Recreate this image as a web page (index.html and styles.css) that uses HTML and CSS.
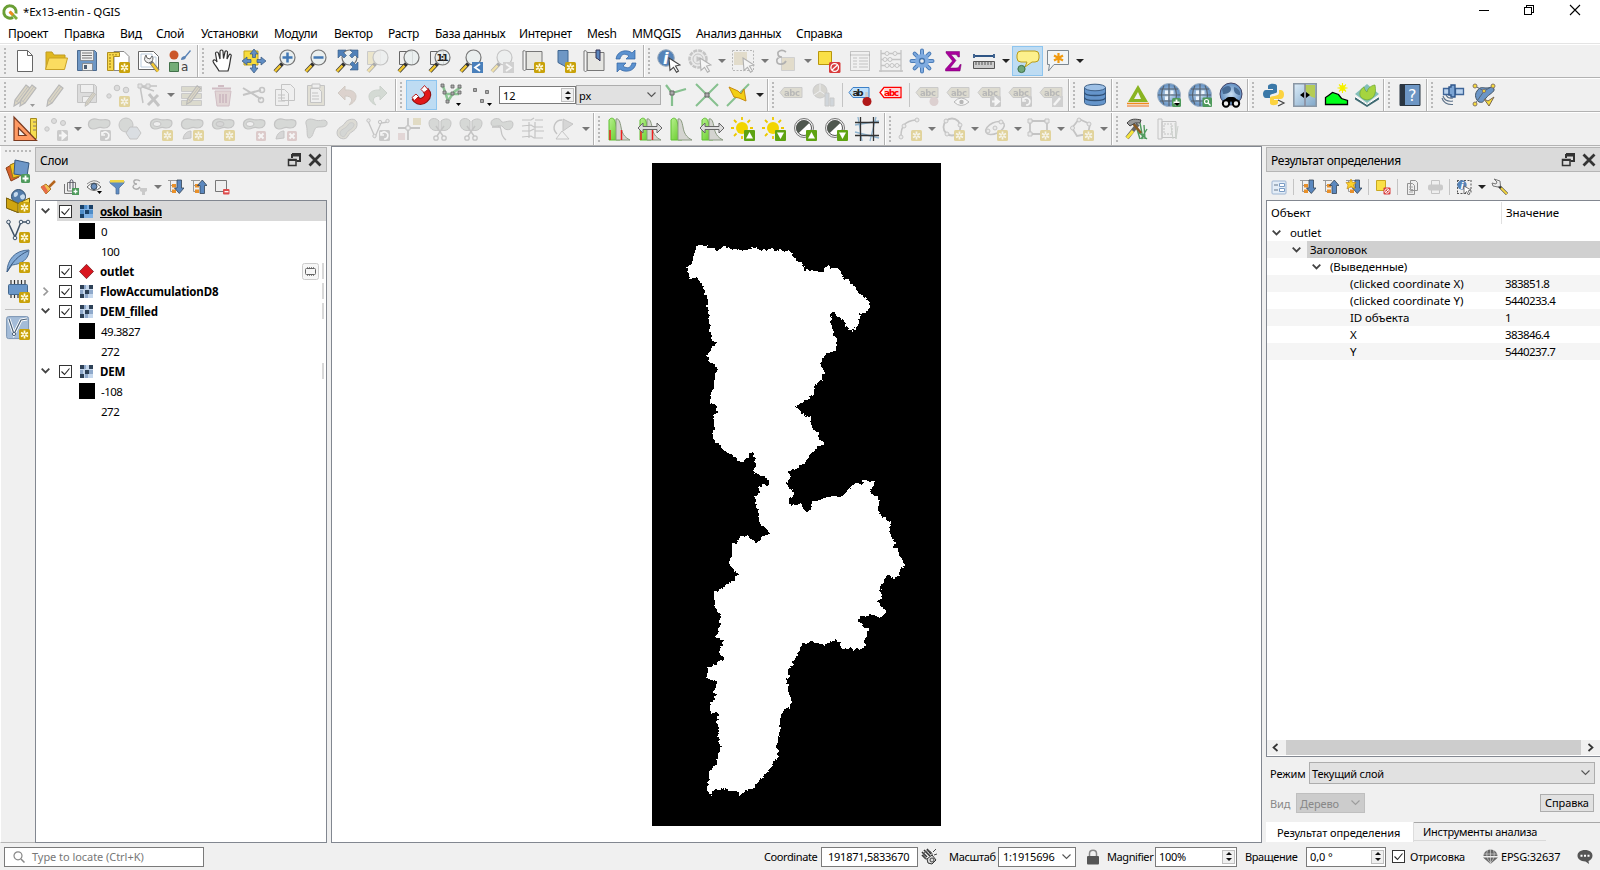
FILE: index.html
```html
<!DOCTYPE html>
<html lang="ru">
<head>
<meta charset="utf-8">
<title>*Ex13-entin - QGIS</title>
<link rel="stylesheet" href="styles.css">
</head>
<body>
<svg class="defs" aria-hidden="true">
<defs>
<linearGradient id="gsky" x1="0" y1="0" x2="1" y2="1"><stop offset="0" stop-color="#dcecf8"/><stop offset="1" stop-color="#7fa6c8"/></linearGradient>
<linearGradient id="ggreen" x1="0" y1="0" x2="1" y2="1"><stop offset="0" stop-color="#b8f090"/><stop offset="1" stop-color="#5cc81c"/></linearGradient>
<radialGradient id="gglobe"><stop offset="0" stop-color="#c9def2"/><stop offset="1" stop-color="#5d8cc0"/></radialGradient>
</defs>
<symbol id="star" viewBox="0 0 24 24"><rect x="13" y="13" width="11" height="11" rx="1.5" fill="#c9a20a"/><path d="M18.500 14.500v8M15 16.500l7 4M22 16.500l-7 4" stroke="#fffbe0" stroke-width="1.700"/><circle cx="18.500" cy="18.500" r="1" fill="#c9a20a"/></symbol>
<symbol id="plus" viewBox="0 0 24 24"><rect x="15" y="15" width="9" height="9" rx="1.500" fill="#4f9a5c"/><path d="M19.500 16.500v6M16.500 19.500h6" stroke="#fff" stroke-width="1.800"/></symbol>
<symbol id="cross" viewBox="0 0 24 24"><rect x="14" y="14" width="10" height="10" rx="1.500" fill="#b98a8a"/><path d="M16.500 16.500l5 5M21.500 16.500l-5 5" stroke="#fff" stroke-width="2"/></symbol>
<symbol id="badgearrow" viewBox="0 0 24 24"><rect x="13" y="13" width="11" height="11" rx="1.500" fill="#8a8a8a"/><path d="M15 18.500h4M18.500 15.500l3.500 3-3.500 3z" stroke="#fff" stroke-width="2" fill="#fff"/></symbol>
<symbol id="badgerot" viewBox="0 0 24 24"><rect x="13" y="13" width="11" height="11" rx="1.500" fill="#8a8a8a"/><path d="M18 22a3.500 3.500 0 1 0-2.500-5.500M15 15v3h3" stroke="#fff" stroke-width="1.600" fill="none"/></symbol>
<symbol id="up" viewBox="0 0 24 24"><rect x="13" y="13" width="11" height="11" rx="1" fill="#5ea312"/><path d="M15 21.500l3.500-6.500 3.500 6.500z" fill="#fff"/></symbol>
<symbol id="down" viewBox="0 0 24 24"><rect x="13" y="13" width="11" height="11" rx="1" fill="#5ea312"/><path d="M15 15.500l3.500 6.500 3.500-6.500z" fill="#fff"/></symbol>
<symbol id="mag" viewBox="0 0 24 24"><path d="M9.500 14.500L2 22.500" stroke="#333" stroke-width="4"/><path d="M7.500 16.700L2 22.300" stroke="#f2c832" stroke-width="2.400"/><circle cx="14.500" cy="8.500" r="7.500" fill="#e9eeee" fill-opacity=".85" stroke="#777" stroke-width="1.200"/></symbol>
<symbol id="pencil" viewBox="0 0 24 24"><path d="M15 2l4 3L8 20l-5 3 1-6z" fill="#b7a878" stroke="#555" stroke-width="1.200"/><path d="M17 3.500L6 18.500M4 17l4 3" stroke="#666" stroke-width="1"/></symbol>
<symbol id="blob" viewBox="0 0 24 24"><path d="M1.500 8C1 2 7 1 11 2.500s9-1.500 11.500 1.500c1.500 4-1 7-5 7-3 0-4-1.500-7 0-4 2-8.500 1-9-3z" fill="#a9b0a9" stroke="#777" stroke-width="1.200"/></symbol>
<symbol id="tag" viewBox="0 0 24 24"><path d="M1 9.500L5 4.500h18v10H5z" fill="#bdb898" stroke="#888"/><text x="5" y="12.700" font-size="8.500" font-weight="bold" textLength="16" fill="#555">abc</text></symbol>
<symbol id="globe" viewBox="0 0 24 24"><circle cx="12" cy="12" r="11.500" fill="url(#gglobe)" stroke="#9fb0c2"/><path d="M12 1v22M1 12h22M3 6h18M3 18h18M7 2.500Q2 12 7 21.500M17 2.500Q22 12 17 21.500" stroke="#55606c" stroke-width="1.100" fill="none"/><path d="M8 7.500h3v3.500H8zM13.500 7.500h3v3.500h-3zM8 13.500h3v3.500H8z" fill="#eef5fc"/></symbol>
<symbol id="hist" viewBox="0 0 24 24"><path d="M2 23V3c2-3 5-2 6 1 2 7 2 14 5 19z" fill="url(#ggreen)" stroke="#5fc030"/><path d="M9 23V2c3-1 4 3 5 8 1 6 3 10 9 13z" fill="#d4d4d0" stroke="#8a9a80"/></symbol>
<symbol id="dbl" viewBox="0 0 24 24"><path d="M0 11l5-5v3.500h14V6l5 5-5 5v-3.500H5V16z" fill="#ddd" stroke="#666" stroke-width="1"/></symbol>
<symbol id="sun" viewBox="0 0 24 24"><circle cx="11" cy="11" r="6" fill="#f2d500"/><path d="M11 0v3M11 19v3M0 11h3M19 11h3M3 3l2.500 2.500M16.500 5.500L19 3M3 19l2.500-2.500" stroke="#ecc800" stroke-width="1.800"/></symbol>
<symbol id="contrast" viewBox="0 0 24 24"><circle cx="11" cy="11" r="9.500" fill="#eee" stroke="#777"/><circle cx="11" cy="11" r="7.500" fill="#fff" stroke="#555"/><path d="M11 3.500a7.500 7.500 0 0 0-5.500 12.800L16.500 5.800A7.500 7.500 0 0 0 11 3.500z" fill="#505850"/></symbol>
<symbol id="scis" viewBox="0 0 24 24"><path d="M11 13C5 15 1 11 1 6s7-6 10-2zM13 13c6 2 10-2 10-7s-7-5-10-2z" fill="#a9b0a9" stroke="#777"/><path d="M8 9l7 10M16 9L9 19" stroke="#777" stroke-width="1.500"/><circle cx="8" cy="21" r="2.200" fill="none" stroke="#777" stroke-width="1.300"/><circle cx="16" cy="21" r="2.200" fill="none" stroke="#777" stroke-width="1.300"/></symbol>
<symbol id="cursor" viewBox="0 0 24 24"><path d="M12 9l11 7-4.500 1 3 5-2 1.300-3-5-3.500 3z" fill="#fff" stroke="#444" stroke-width="1.100"/></symbol>
<symbol id="raster" viewBox="0 0 13 13"><path d="M0 0h13v13H0z" fill="#c5d7ec"/><path d="M0 0h4v4H0zM9 0h4v4H9zM5 5h4v4H5zM0 9h4v4H0z" fill="#2e4157"/><path d="M4 0h2v4H4zM0 5h3v4H0zM9 5h4v4H9zM5 9h3v4H5z" fill="#8fa9cb"/></symbol>
<symbol id="rasterb" viewBox="0 0 13 13"><path d="M0 0h13v13H0z" fill="#7fb1e4"/><path d="M0 0h4v4H0zM9 0h4v4H9zM5 5h4v4H5zM0 9h4v4H0z" fill="#184068"/><path d="M4 0h3v4H4zM0 5h4v4H0zM9 5h4v4H9z" fill="#4d8cc8"/></symbol>
<symbol id="ck" viewBox="0 0 13 13"><rect x=".5" y=".5" width="12" height="12" fill="#fff" stroke="#333"/><path d="M2.500 6.500l3 3 5-6" fill="none" stroke="#222" stroke-width="1.100"/></symbol>
<symbol id="chev" viewBox="0 0 9 6"><path d="M.7.700l3.800 3.800L8.300.7" fill="none" stroke="#444" stroke-width="1.800"/></symbol>
<symbol id="chevthin" viewBox="0 0 9 6"><path d="M.5.500l4 4 4-4" fill="none" stroke="#555" stroke-width="1.100"/></symbol>
<symbol id="float" viewBox="0 0 14 14"><path d="M5 1h8v7H9.500M5 1v4M5 2.500h8" fill="none" stroke="#333" stroke-width="2"/><rect x="1.500" y="6.500" width="7.500" height="6" fill="#dadada" stroke="#333" stroke-width="1.500"/><path d="M1 7h8.500" stroke="#333" stroke-width="2"/></symbol>
<symbol id="x" viewBox="0 0 14 14"><path d="M1.500 1.500l11 11M12.500 1.500l-11 11" stroke="#333" stroke-width="2.800"/></symbol>
<symbol id="expand" viewBox="0 0 16 16"><path d="M0 1.500h9M2.500 2v10.500h4M2.500 6.500h3" stroke="#999" fill="none"/><path d="M4 5h4v3.500H4zM4 10.500h4v3.500H4z" fill="#e8902a"/><path d="M9 1h4.500v8h2.500l-4.700 5.500L6.500 9H9z" fill="#5b88bf" stroke="#345" stroke-width=".8"/></symbol>
<symbol id="collapse" viewBox="0 0 16 16"><path d="M0 1.500h9M2.500 2v10.500h4M2.500 6.500h3" stroke="#999" fill="none"/><path d="M4 5h4v3.500H4zM4 10.500h4v3.500H4z" fill="#e8902a"/><path d="M9 14.500h4.500v-8H16L11.300 1 6.500 6.500H9z" fill="#5b88bf" stroke="#345" stroke-width=".8"/></symbol>
</svg>

<header class="titlebar">
<svg class="logo" viewBox="0 0 16 16"><path d="M8 1.800a6.200 6.200 0 1 0 3 11.600M14 9.500A6.200 6.200 0 0 0 8 1.800" fill="none" stroke="#6a9f35" stroke-width="3"/><path d="M8 8l7 7" stroke="#7fb03c" stroke-width="2.800"/><path d="M7.500 7.500l3.500 3.500" stroke="#ee8a1d" stroke-width="2.600"/></svg>
<span class="apptitle">*Ex13-entin - QGIS</span>
<svg class="winctl" viewBox="0 0 110 16"><g fill="none" stroke="#000" shape-rendering="crispEdges"><path d="M3 8.500h10M48.500 5.500h7v7h-7zM50.500 5v-2h7v7h-2"/></g><path d="M94 3l10 10M104 3L94 13" stroke="#000" stroke-width="1.100"/></svg>
</header>
<nav class="menubar">
<span class="m1">Проект</span><span class="m2">Правка</span><span class="m3">Вид</span><span class="m4">Слой</span><span class="m5">Установки</span><span class="m6">Модули</span><span class="m7">Вектор</span><span class="m8">Растр</span><span class="m9">База данных</span><span class="m10">Интернет</span><span class="m11">Mesh</span><span class="m12">MMQGIS</span><span class="m13">Анализ данных</span><span class="m14">Справка</span>
</nav>

<div class="row">
<div class="tb">
<i class="grip"></i>
<svg viewBox="0 0 24 24"><path d="M4.500 1.500h10l5 5v16h-15z" fill="#fff" stroke="#666"/><path d="M14.500 1.500v5h5" fill="none" stroke="#666"/></svg>
<svg viewBox="0 0 24 24"><path d="M2 20V3h6l2 3h11v4" fill="#e0b820" stroke="#c09b20"/><path d="M1.500 20.500L5 9h18.500l-3 11.500z" fill="#fbdc60" stroke="#c9a227"/></svg>
<svg viewBox="0 0 24 24"><path d="M2.500 1.500h17l2 2v18h-19z" fill="#6e97c5" stroke="#4a6a90"/><path d="M5.500 1.500h13v10h-13zM7.500 14.500h10v7h-10z" fill="#eee" stroke="#777" stroke-width=".7"/><path d="M7 4h10M7 6.500h10M7 9h10" stroke="#777"/><path d="M9 16h3v4H9z" fill="#4c5c70"/></svg>
<svg viewBox="0 0 24 24"><path d="M8 2.500h10l5 5v14H8z" fill="#fff" stroke="#888"/><path d="M1.500 3.500h12v4h-6v14h-6z" fill="#f8d84a" stroke="#b08f20"/><path d="M4 5v1.500M7 5v1.500M10 5v1.500M3 9h2M3 12h2M3 15h2M3 18h2" stroke="#8c6e10"/><use href="#star"/></svg>
<svg viewBox="0 0 24 24"><path d="M1.500 2.500h15l5 5v13h-20z" fill="#fff" stroke="#666"/><path d="M4 5h11v3h4v10H4z" fill="none" stroke="#bcd"/><path d="M13 12l8 10" stroke="#777" stroke-width="4"/><path d="M15 14.500l6 8" stroke="#f2c832" stroke-width="2.500"/><path d="M8 8a4 4 0 0 0 6 5 4 4 0 0 0 1-6l-2 3-3-1-1-3z" fill="#eee" stroke="#666"/></svg>
<svg viewBox="0 0 24 24"><circle cx="6" cy="6" r="4.500" fill="#cb5628"/><path d="M1.500 13.500h9v9h-9z" fill="#73ad78" stroke="#42714a"/><path d="M13 11c0-3 2-4 4-4l5-6 1 1-5 6c0 2-2 3-5 3z" fill="#5a83b5"/><text x="13" y="22" font-size="12" fill="#444">a</text></svg>
</div>
<div class="tb">
<i class="grip"></i>
<svg viewBox="0 0 24 24"><path d="M8 22c-2-4-6-8-6-10 1-2 3-1 4 1L4.500 4.500c0-2 2.500-2 3 0L9 10V2.500c0-2 3-2 3 0l.5 7L14 3c.5-2 3-1 2.500.7L16 10l2-4c1-1.500 3-.5 2 1.500-1 4-1 9-3 14.500z" fill="#fff" stroke="#333" stroke-width="1.200"/></svg>
<svg viewBox="0 0 24 24"><path d="M2 2h14v14H2z" fill="#f7dc3c" stroke="#c2a31d"/><path d="M12 0l4 5h-2.500v3.500h-3V5H8zM12 24l-4-5h2.500v-3.500h3V19H16zM0 12l5-4v2.500h4v3H5V16zM24 12l-5-4v2.500h-4v3h4V16z" fill="#5f8dc4" stroke="#37567c" stroke-width=".7"/></svg>
<svg viewBox="0 0 24 24"><use href="#mag"/><path d="M14.500 3.500v10M9.500 8.500h10" stroke="#4379b5" stroke-width="2.500"/></svg>
<svg viewBox="0 0 24 24"><use href="#mag"/><path d="M9.500 8.500h10" stroke="#4379b5" stroke-width="2.500"/></svg>
<svg viewBox="0 0 24 24"><use href="#mag"/><path d="M3 1h8L8.500 3.500l3 3-2.500 2.500-3-3L3 9zM23 1h-8l2.500 2.500-3 3L17 9l3-3 3 3zM23 21v-8l-2.500 2.500-3-3L15 15l3 3-3 3z" fill="#4f80b8" stroke="#35597f" stroke-width=".6"/></svg>
<svg class="dim" viewBox="0 0 24 24"><path d="M1.500 2.500h13v13h-13z" fill="#e3d28c" stroke="#888"/><use href="#mag"/></svg>
<svg viewBox="0 0 24 24"><path d="M2.500 2.500h13v13h-13z" fill="#eee" stroke="#666"/><use href="#mag"/></svg>
<svg viewBox="0 0 24 24"><path d="M2.500 2.500h13v13h-13z" fill="#eee" stroke="#666"/><use href="#mag"/><text x="8.500" y="12" font-size="9.500" font-weight="bold" textLength="12" fill="#222">1:1</text></svg>
<svg viewBox="0 0 24 24"><use href="#mag"/><path d="M13 13h11v11H13z" fill="#4a80bb"/><path d="M21 15l-5 3.500 5 3.500" fill="none" stroke="#fff" stroke-width="1.800"/></svg>
<svg class="dim" viewBox="0 0 24 24"><use href="#mag"/><path d="M13 13h11v11H13z" fill="#999"/><path d="M16 15l5 3.500-5 3.500" fill="none" stroke="#fff" stroke-width="1.800"/></svg>
<svg viewBox="0 0 24 24"><path d="M5 2.500h16v18H5z" fill="#e6e6e2" stroke="#777"/><path d="M2 2c3-1 3 1 3 3v15c0 2-3 2-3 0z" fill="#f4f4f4" stroke="#777"/><use href="#star"/></svg>
<svg viewBox="0 0 24 24"><path d="M6 1.500h10v18l-4.500-3-5.500-3z" fill="#6e97c5" stroke="#3f6691"/><use href="#star"/></svg>
<svg viewBox="0 0 24 24"><path d="M4 3.500h17v18H4z" fill="#e6e6e2" stroke="#777"/><path d="M1 2c3-1 3 1 3 3v16c0 2-3 2-3 0z" fill="#f4f4f4" stroke="#777"/><path d="M13 1h4v11l-2-2-2-1z" fill="#5a86bd" stroke="#335"/></svg>
<svg viewBox="0 0 24 24"><path d="M2 10C3 1 14 0 18 4l3-3v9h-9l3-3C11 4 7 5 6 10zM22 14c-1 9-12 10-16 6l-3 3v-9h9l-3 3c4 3 8 2 9-3z" fill="#5c92d0" stroke="#2f62a0" stroke-width=".7"/></svg>
</div>
<div class="tb last">
<i class="grip"></i>
<svg viewBox="0 0 24 24"><circle cx="9" cy="9" r="8.300" fill="#5583b8" stroke="#9ab"/><text x="6" y="15" font-family="Liberation Serif" font-style="italic" font-weight="bold" font-size="16" fill="#fff">i</text><use href="#cursor"/></svg>
<svg class="dim" viewBox="0 0 24 24"><circle cx="10" cy="10" r="8.500" fill="#ddd" stroke="#777" stroke-width="2.500" stroke-dasharray="4 1"/><circle cx="10" cy="10" r="5" fill="#ddd" stroke="#777"/><path d="M8.500 7l5 3-5 3z" fill="#777"/><use href="#cursor"/></svg><b class="ar g"></b>
<svg class="dim" viewBox="0 0 24 24"><path d="M1.500 1.500h21v20h-21z" fill="none" stroke="#555" stroke-dasharray="2 1.500"/><path d="M3 3h13v13H3z" fill="#cbb98c"/><use href="#cursor"/></svg><b class="ar g"></b>
<svg class="dim" viewBox="0 0 24 24"><path d="M7.500 8.500h13v13h-13z" fill="#cbb98c" stroke="#999"/><path d="M12 3C8 0 3 2 4 5c0 2 2 3 4 3-4 0-6 2-5 5s7 3 9-1" fill="none" stroke="#444" stroke-width="1.700"/></svg><b class="ar g"></b>
<svg viewBox="0 0 24 24"><path d="M1.500 2.500h13v13h-13z" fill="#fae047" stroke="#b8960c"/><rect x="12" y="13" width="11.500" height="11" rx="1.500" fill="#d83b3b"/><circle cx="17.700" cy="18.500" r="3.800" fill="none" stroke="#fff" stroke-width="1.300"/><path d="M15 21l5.500-5" stroke="#fff" stroke-width="1.300"/></svg>
<svg class="dim" viewBox="0 0 24 24"><path d="M2.500 2.500h19v19h-19zM2 6h20M5 9h4M5 12h4M5 15h4M5 18h4M11 9h9M11 12h9M11 15h9M11 18h9" fill="none" stroke="#777"/></svg>
<svg class="dim" viewBox="0 0 24 24"><path d="M2 1v22M22 1v22M2 4.500h20M2 10.500h20M2 16.500h20M0 22h24" fill="none" stroke="#777" stroke-width="1.300"/><g fill="#eee" stroke="#777"><circle cx="8" cy="4.500" r="2"/><circle cx="16" cy="4.500" r="2"/><circle cx="6" cy="10.500" r="2"/><circle cx="11" cy="10.500" r="2"/><circle cx="8" cy="16.500" r="2"/><circle cx="13" cy="16.500" r="2"/><circle cx="18" cy="16.500" r="2"/></g></svg>
<svg viewBox="0 0 24 24"><path d="M12 1.500v21M1.500 12h21M4.600 4.600l14.800 14.800M19.400 4.600L4.600 19.400" stroke="#4c7db8" stroke-width="4" stroke-linecap="round"/><path d="M12 1.500v21M1.500 12h21M4.600 4.600l14.800 14.800M19.400 4.600L4.600 19.400" stroke="#7fabe0" stroke-width="2" stroke-linecap="round"/><circle cx="12" cy="12" r="7" fill="#7fabe0"/><circle cx="12" cy="12" r="2.500" fill="#eee" stroke="#4374ad" stroke-width="1.300"/></svg>
<svg viewBox="0 0 24 24"><path d="M5 2.500h13.500V8h-1.500c-.5-2-2-2.500-4-2.500H10l5 6-6 7.500h6c2.500 0 3-1 4-3.500h1.200L19 22H4.500v-2l7-8-6.500-8z" fill="#a8009c" stroke="#75006c" stroke-width=".5"/></svg>
<svg viewBox="0 0 24 24"><path d="M3 7h18M2 5v4M22 5v4" stroke="#2f5585" stroke-width="1.800"/><path d="M1.500 12.500h21v7h-21z" fill="#ccc" stroke="#555"/><path d="M4 13v3M7 13v3M10 13v3M13 13v3M16 13v3M19 13v3" stroke="#555"/></svg><b class="ar"></b>
<span class="on"><svg viewBox="0 0 24 24"><path d="M5 2h14q4 0 4 4v3q0 4-4 4h-3l-7 5 2-5H5q-4 0-4-4V6q0-4 4-4z" fill="#fdf08c" stroke="#b99c1a"/><circle cx="5.500" cy="20" r="3.600" fill="#6fa87a" stroke="#3d6f49"/></svg></span>
<svg viewBox="0 0 24 24"><path d="M1.500 1.500h21v14H8L2.500 22l1-6.500h-2z" fill="#f1f5f7" stroke="#7d8790"/><path d="M12.500 4v10M8 6.500l9 5M17 6.500l-9 5" stroke="#f09a10" stroke-width="2.200"/></svg><b class="ar"></b>
</div>
</div>

<div class="row">
<div class="tb">
<i class="grip"></i>
<svg class="dim" viewBox="0 0 24 24"><use href="#pencil" x="-2"/><use href="#pencil" x="4"/><path d="M17 21h5l-2.500 3z"/></svg>
<svg class="dim" viewBox="0 0 24 24"><use href="#pencil"/></svg>
<svg class="dim" viewBox="0 0 24 24"><path d="M2.500 1.500h17l2 2v16h-19z" fill="#bbb" stroke="#777"/><path d="M5.500 1.500h13v8h-13zM7.500 13.500h8v6h-8z" fill="#eee" stroke="#777"/><use href="#pencil" x="8" y="8" width="16" height="16"/></svg>
<svg class="dim" viewBox="0 0 24 24"><g fill="#bbb" stroke="#777"><circle cx="3" cy="13" r="2.200"/><circle cx="11" cy="5" r="2.800"/><circle cx="20" cy="7" r="2.800"/></g><use href="#star"/></svg>
<svg class="dim" viewBox="0 0 24 24"><path d="M3 3h17M3 3l3 17M3 3l14 5" stroke="#777" stroke-width="1.500"/><path d="M1 1h4v4H1zM9 1h4v4H9z" fill="#ccc" stroke="#777"/><path d="M11 22l10-10M12 11l10 12" stroke="#777" stroke-width="3"/></svg><b class="ar g"></b>
<svg class="dim" viewBox="0 0 24 24"><path d="M1.500 3.500h20v5h-20zM1.500 10.500h20v5h-20zM1.500 17.500h20v5h-20z" fill="#b8b490" stroke="#888"/><use href="#pencil" x="4" y="1" width="21" height="21"/></svg>
<svg class="dim" viewBox="0 0 24 24"><path d="M4 8h16l-2 15H6z" fill="#c8a8a8" stroke="#967"/><path d="M1 5.500h19M7 3h6M9 11v9M12 11v9M15 11v9" stroke="#967" stroke-width="2"/></svg>
<svg class="dim" viewBox="0 0 24 24"><path d="M1 5l18 11M1 12l18-5" stroke="#777" stroke-width="2"/><circle cx="20" cy="7" r="2.500" fill="none" stroke="#777" stroke-width="1.500"/><circle cx="19" cy="17" r="2.500" fill="none" stroke="#777" stroke-width="1.500"/></svg>
<svg class="dim" viewBox="0 0 24 24"><path d="M8.500 1.500h9l4 4v12h-13zM2.500 6.500h9l4 4v12h-13z" fill="#eee" stroke="#777"/><path d="M5 12h7M5 15h7M5 18h7" stroke="#777"/></svg>
<svg class="dim" viewBox="0 0 24 24"><path d="M3.500 2.500h17v20h-17z" fill="#c9c3a8" stroke="#777"/><path d="M6.500 5.500h8l3 3v11h-11zM8 1h8v4H8z" fill="#eee" stroke="#777"/><path d="M8 10h6M8 13h7M8 16h7" stroke="#777"/></svg>
<svg class="dim" viewBox="0 0 24 24"><path d="M3 10l7-7v4c15-1 13 12 4 15 4-4 4-9-4-9v4z" fill="#b99f90" stroke="#987"/></svg>
<svg class="dim" viewBox="0 0 24 24"><path d="M21 10l-7-7v4C-1 6 1 19 10 22c-4-4-4-9 4-9v4z" fill="#a5b5a5" stroke="#898"/></svg>
</div>
<div class="tb">
<i class="grip"></i>
<span class="on"><svg viewBox="0 0 24 24"><path d="M4.500 14.500c3 4.500 7 5 10.500 2s3.500-6 .5-9.500" fill="none" stroke="#8e1010" stroke-width="7"/><path d="M4.500 14.500c3 4.500 7 5 10.500 2s3.500-6 .5-9.500" fill="none" stroke="#e01818" stroke-width="5"/><path d="M2 14.500l4-3.500 2.500 2.500L4.500 17.500zM11 6.500l3.500-4L18 6.500 14 9.500z" fill="#fff" stroke="#b22" stroke-width="1"/></svg></span>
<svg viewBox="0 0 24 24"><path d="M3 3l5 15 6-9 7-5M5 11h14" fill="none" stroke="#8cc494" stroke-width="2.500"/><g fill="#aaa" stroke="#666" stroke-width=".8"><path d="M1 1h3v3H1zM3 8h3v3H3zM6 17h3v3H6zM11 9h3v3h-3zM11 2h3v3h-3zM18 2h3v3h-3zM18 8h3v3h-3z"/></g><path d="M16 20h5l-2.500 3z"/></svg>
<svg viewBox="0 0 24 24"><g fill="#aaa" stroke="#777"><path d="M2.500 5.500h3v3h-3zM14.500 7.500h3v3h-3zM9.500 16.500h3v3h-3z"/></g><path d="M16 20h5l-2.500 3z"/></svg>
<div class="spin tol"><span>12</span><em><u></u><s></s></em></div>
<div class="combo unit"><span>px</span><svg class="cv" viewBox="0 0 9 6"><use href="#chevthin"/></svg></div>
<svg viewBox="0 0 24 24"><path d="M2 2l6 8 14-4M8 9v14" fill="none" stroke="#86c08f" stroke-width="2.200"/><path d="M6 8h4v4H6z" fill="#aaa" stroke="#666"/></svg>
<svg viewBox="0 0 24 24"><path d="M1 1l22 22M23 1L1 23" stroke="#86c08f" stroke-width="2"/><path d="M10 10h4v4h-4z" fill="#aaa" stroke="#666"/></svg>
<svg viewBox="0 0 24 24"><path d="M23 1L1 23" stroke="#86c08f" stroke-width="2"/><path d="M3 4l9 4 3 3 3-5 2 12-7-3-5-1z" fill="#f2cf15" stroke="#c78a10"/></svg><b class="ar"></b>
</div>
<div class="tb">
<i class="grip"></i>
<svg class="dim" viewBox="2 0 24 24"><use href="#tag" width="24" height="24"/></svg>
<svg class="dim" viewBox="0 0 24 24"><circle cx="8" cy="8" r="7" fill="#aaa69a" stroke="#888"/><path d="M8 8V1M8 8l6 4M8 8l-6 4" stroke="#eee"/><path d="M13 10h4v13h-4zM18 15h4v8h-4z" fill="#9aa8b4" stroke="#888"/></svg>
<i class="vs"></i>
<svg viewBox="0 0 24 24"><path d="M1 9.500L5 4.500h16v10H5z" fill="#bfe0fb" stroke="#3c80c8"/><text x="4.500" y="13" font-size="9.500" font-weight="bold" textLength="11" fill="#222">ab</text><path d="M18.500 9v8" stroke="#ccc" stroke-width="2.600"/><circle cx="19" cy="18.500" r="4.500" fill="#b01818"/></svg>
<svg viewBox="0 0 24 24"><path d="M1 9.500L5 4.500h17v10H5z" fill="#fff" stroke="red" stroke-width="1.300"/><path d="M5 5h16v9H5z" fill="#ffd6d6"/><text x="5" y="12.500" font-size="9" font-weight="bold" textLength="15" fill="red">abc</text></svg>
<i class="vs"></i>
<svg class="dim" viewBox="0 0 24 24"><use href="#tag"/><circle cx="19" cy="18.500" r="4.500" fill="#b99"/></svg>
<svg class="dim" viewBox="0 0 24 24"><use href="#tag"/><path d="M8 19q7-8 15 0-8 7-15 0z" fill="#fff" stroke="#555"/><circle cx="15.500" cy="19" r="2.200" fill="#555"/></svg>
<svg class="dim" viewBox="0 0 24 24"><use href="#tag"/><use href="#badgearrow"/></svg>
<svg class="dim" viewBox="0 0 24 24"><use href="#tag"/><use href="#badgerot"/></svg>
<svg class="dim" viewBox="0 0 24 24"><use href="#tag"/><rect x="13" y="13" width="11" height="11" fill="#999"/><path d="M15 22l6-7" stroke="#fff" stroke-width="2.500"/></svg>
</div>
<div class="tb">
<i class="grip"></i>
<svg class="nudge" viewBox="0 0 24 24"><path d="M1.500 4.500v15c0 4 21 4 21 0v-15" fill="#6595cb" stroke="#3d5f86"/><path d="M1.500 9.500c0 4 21 4 21 0M1.500 14.500c0 4 21 4 21 0" fill="none" stroke="#2f4f74" stroke-width="1.300"/><ellipse cx="12" cy="4.500" rx="10.500" ry="3.300" fill="#9dc0e6" stroke="#3d5f86"/></svg>
</div>
<div class="tb">
<i class="grip"></i>
<svg class="nudge" viewBox="0 0 24 24"><path d="M12 2l10 17H2zM12 9l-4 7h7z" fill="#8ab422" fill-rule="evenodd"/><path d="M1 20.500h22" stroke="#f08a1c" stroke-width="1.500"/><path d="M1 23h22" stroke="#f09a5c" stroke-width="1.500"/></svg>
<svg class="nudge" viewBox="0 0 24 24"><use href="#globe"/><use href="#plus"/><path d="M17 20h6l-3 3z"/></svg>
<svg class="nudge" viewBox="0 0 24 24"><use href="#globe"/><rect x="14.500" y="14.500" width="9.500" height="9.500" rx="1" fill="#4f9a5c"/><circle cx="18.500" cy="18.500" r="2" fill="none" stroke="#fff" stroke-width="1.200"/><path d="M20 20l2.500 2.500" stroke="#fff" stroke-width="1.300"/></svg>
<svg class="nudge" viewBox="0 0 24 24"><circle cx="12" cy="11" r="11" fill="url(#gglobe)" stroke="#446"/><path d="M3 6c4-4 9-4 9 0s-5 5-8 5zM15 4c4 1 7 4 6 8-3 0-7-2-6-8z" fill="#476b94"/><path d="M5 22c-1-3 2-8 5-8h4c3 0 6 5 5 8h-5l-2-4-2 4z"/><circle cx="7" cy="20.500" r="3.200" fill="#eee" stroke="#000" stroke-width="2"/><circle cx="17" cy="20.500" r="3.200" fill="#eee" stroke="#000" stroke-width="2"/></svg>
</div>
<div class="tb">
<i class="grip"></i>
<svg class="nudge" viewBox="0 0 24 24"><path d="M6 6V3c1-3 9-3 9 0v6c0 2-7 1-7 4v2H4C0 15 0 7 4 7h7V6z" fill="#3a78a8"/><path d="M17 7h2c4 0 4 9 0 9h-7v1h4v3c-1 3-8 3-8 0v-5c0-3 9-1 9-5z" fill="#fcd340"/><path d="M16 17l6 3-6 3" fill="none" stroke="#444" stroke-width="1.200"/></svg>
<svg class="nudge" viewBox="0 0 24 24"><path d="M.8.800h22.400v22.400H.8z" fill="url(#gsky)" stroke="#8a97a5" stroke-width="1.600"/><path d="M12 2h10v13q-8-2-10-9z" fill="#b5cc55"/><path d="M12 1v22" stroke="#889" stroke-width="1.500"/><path d="M7 12l4-3v6zM17 12l-4-3v6z"/></svg>
<svg class="nudge" viewBox="0 0 24 24"><path d="M1.500 21.500v-7l3-2 4-3 6 2 3 4 6 2v4z" fill="#00ff1a" stroke="#000" stroke-width="1.300"/><circle cx="18.500" cy="5" r="3" fill="#ff0"/><path d="M18.500 0v10M13.500 5h10M15 1.500l7 7M22 1.500l-7 7" stroke="#f4ee00" stroke-width="1.100"/></svg>
<svg class="nudge" viewBox="0 0 24 24"><path d="M0 14v2.500L12 24l12-7.500V14l-12 7z" fill="#3f6a72"/><path d="M0 11L12 1l12 10-12 9z" fill="#83bfb9"/><path d="M0 13.500l12 8 12-8" stroke="#fff" fill="none"/><path d="M12 17C1 15 5 6 9 4c1 4 3 5 3 5 1-5 6-7 8-7 2 10-2 14-8 15z" fill="#a6d43f" stroke="#6aa52f" stroke-width=".7"/></svg>
</div>
<div class="tb">
<i class="grip"></i>
<svg class="nudge" viewBox="0 0 24 24"><path d="M2 1.500h20v21H2z" fill="#6d96c4" stroke="#2b3642"/><path d="M2 1h5v22H2z" fill="#2b3642"/><text x="10" y="17.500" font-family="Liberation Serif" font-size="16" fill="#fff">?</text></svg>
</div>
<div class="tb last">
<i class="grip"></i>
<svg class="nudge" viewBox="0 0 24 24"><path d="M2.500 5.500h6v6h-6zM14.500 5.500h8v6h-8z" fill="#b9d2ee" stroke="#3f6598" stroke-width="1.300"/><path d="M8 4h2V2h4v12h-4v-2H8z" fill="#7aa3d3" stroke="#2f568a" stroke-width="1.400"/><path d="M12 15c-4 1-6-1-7-3M12 18c-6 1-9-2-10-5M12 21.500C6 22 2 19 1 15" fill="none" stroke="#5a6f87" stroke-width="1.100"/></svg>
<svg class="nudge" viewBox="0 0 24 24"><path d="M5 8c3-5 6-3 9-3 4 0 7-2 8 1s-5 5-8 9-3 5-7 4c-3-2-5-7-2-11z" fill="#6b95c6" stroke="#456"/><path d="M3 3l9 5 9-5M12 8L3 21" stroke="#567" fill="none"/><g fill="#f8dc3a" stroke="#876"><circle cx="3" cy="3" r="2"/><circle cx="21" cy="3" r="2"/><circle cx="3" cy="21" r="2"/><circle cx="12" cy="8" r="1.600"/></g><path d="M12 16l4 2 6-4-5 9z" fill="#f8dc3a" stroke="#765"/></svg>
</div>
</div>

<div class="row">
<div class="tb">
<i class="grip"></i>
<svg viewBox="0 0 24 24"><path d="M17.500 1.500h6v20h-6z" fill="#f6dd4f" stroke="#a48a20"/><path d="M20 5h3M20 9h3M20 13h3" stroke="#876"/><path d="M1 0v23.500h22.500zM5.500 11v7.500H13z" fill="#ff9a63" fill-rule="evenodd" stroke="#7a3a20" stroke-width="1.200"/></svg>
<svg class="dim" viewBox="0 0 24 24"><g fill="#bbb" stroke="#777"><circle cx="3" cy="12" r="2.200"/><circle cx="10" cy="4" r="2.500"/><circle cx="19" cy="6" r="2.500"/></g><use href="#badgearrow"/></svg><b class="ar g"></b>
<svg class="dim" viewBox="0 0 24 24"><use href="#blob"/><use href="#badgerot"/></svg>
<svg class="dim" viewBox="0 0 24 24"><circle cx="8" cy="8" r="7" fill="#aab0aa" stroke="#777"/><path d="M8 16l4-6h7l4 6-4 6h-7z" fill="#b5bfcc" stroke="#777"/></svg>
<svg class="dim" viewBox="0 0 24 24"><use href="#blob"/><ellipse cx="8" cy="7" rx="4" ry="2.500" fill="#eee" stroke="#777"/><use href="#star"/></svg>
<svg class="dim" viewBox="0 0 24 24"><use href="#blob"/><path d="M3 22c1-6 5-8 8-8v7z" fill="#aaa" stroke="#777"/><use href="#star"/></svg>
<svg class="dim" viewBox="0 0 24 24"><use href="#blob"/><ellipse cx="9" cy="7" rx="4" ry="2.500" fill="#aaa" stroke="#777"/><use href="#star"/></svg>
<svg class="dim" viewBox="0 0 24 24"><use href="#blob"/><ellipse cx="8" cy="7" rx="4" ry="2.500" fill="#eee" stroke="#777"/><use href="#cross"/></svg>
<svg class="dim" viewBox="0 0 24 24"><use href="#blob"/><path d="M3 22c1-6 5-8 8-8v7z" fill="#aaa" stroke="#777"/><use href="#cross"/></svg>
<svg class="dim" viewBox="0 0 24 24"><path d="M2 7C1 2 6 1 11 3s10-2 12 2c1 5-4 5-9 5s-4 11-9 11c-3 0-1-9-3-14z" fill="#a9b0a9" stroke="#777"/></svg>
<svg class="dim" viewBox="0 0 24 24"><path d="M2 16C2 10 8 10 10 6s11-6 12 0c1 8-7 8-9 13s-11 3-11-3z" fill="#bbb7a5" stroke="#777"/><path d="M5 16c0-4 6-4 8-8s7-2 6 0c-1 5-6 4-8 9s-6 2-6-1z" fill="#a5aaa5" stroke="#888"/></svg>
<svg class="dim" viewBox="0 0 24 24"><path d="M2 4l7 16 6-14 7-1" fill="none" stroke="#777" stroke-width="1.300"/><g fill="#ddd" stroke="#777"><circle cx="2.500" cy="3.500" r="1.700"/><circle cx="14" cy="5" r="1.700"/><circle cx="21.500" cy="4" r="1.700"/><circle cx="8.500" cy="19" r="1.700"/></g><use href="#badgerot"/></svg>
<svg class="dim" viewBox="0 0 24 24"><path d="M11 1v22M1 11h22" stroke="#777" stroke-width="1.800"/><rect x="16" y="1" width="8" height="7" fill="#c9b878"/><rect x="1" y="16" width="7" height="7" fill="#caa"/><path d="M9 9h4v4H9z" fill="#eee" stroke="#777"/></svg>
<svg class="dim" viewBox="0 0 24 24"><use href="#scis"/></svg>
<svg class="dim" viewBox="0 0 24 24"><use href="#scis"/></svg>
<svg class="dim" viewBox="0 0 24 24"><path d="M1 6c0-5 9-6 10-2s12-4 12 3-8 7-10 3S1 13 1 6z" fill="#a9b0a9" stroke="#777"/><path d="M8 9c6 2 0 8 8 14M2 10h9" fill="none" stroke="#777" stroke-width="1.300"/></svg>
<svg class="dim" viewBox="0 0 24 24"><path d="M1 3h9l3-2M14 3h8M1 9l9-1 3 2h9M1 14h8l4-2M14 14h9M1 20l9-1 3 2h9M8 5v16M14 5v16" fill="none" stroke="#777" stroke-width="1.200"/></svg>
<svg class="dim" viewBox="0 0 24 24"><path d="M11 2l10 5-10 7z" fill="#aaa" stroke="#777"/><path d="M10 14L4 22h13z" fill="none" stroke="#777"/><path d="M5 17C-1 11 3 3 10 3" fill="none" stroke="#777" stroke-width="1.400"/></svg><b class="ar g"></b>
</div>
<div class="tb">
<i class="grip"></i>
<svg viewBox="0 0 24 24"><use href="#hist"/><path d="M3 13v10M14.500 13v10" stroke="#f02020" stroke-width="1.500"/></svg>
<svg viewBox="0 0 24 24"><use href="#hist"/><path d="M3 13v10M14.500 13v10" stroke="#f02020" stroke-width="1.500"/><use href="#dbl"/></svg>
<svg viewBox="0 0 24 24"><use href="#hist"/></svg>
<svg viewBox="0 0 24 24"><use href="#hist"/><use href="#dbl"/></svg>
<svg viewBox="0 0 24 24"><use href="#sun"/><use href="#up"/></svg>
<svg viewBox="0 0 24 24"><use href="#sun"/><use href="#down"/></svg>
<svg viewBox="0 0 24 24"><use href="#contrast"/><use href="#up"/></svg>
<svg viewBox="0 0 24 24"><use href="#contrast"/><use href="#down"/></svg>
<svg viewBox="0 0 24 24"><path d="M3 0l4 24M15 24l6-24M0 8l24-4M0 15l24 6" stroke="#8fb4cf" stroke-width="1.300"/><path d="M5.500 0v24M18.500 0v24M0 5.500h24M0 18.500h24" stroke="#333" stroke-width="1.300"/></svg>
</div>
<div class="tb">
<i class="grip"></i>
<svg class="dim" viewBox="0 0 24 24"><path d="M3 19C3 9 7 4 18 3" fill="none" stroke="#777" stroke-width="1.500"/><g fill="#ddd" stroke="#777"><circle cx="3" cy="20" r="2"/><circle cx="6" cy="9" r="2"/><circle cx="19" cy="3" r="2"/></g><use href="#star"/></svg><b class="ar g"></b>
<svg class="dim" viewBox="0 0 24 24"><circle cx="11" cy="10" r="8.500" fill="none" stroke="#777" stroke-width="1.800"/><g fill="#ddd" stroke="#777"><circle cx="5" cy="4" r="2"/><circle cx="19" cy="8" r="2"/><circle cx="6" cy="17" r="2"/></g><use href="#star"/></svg><b class="ar g"></b>
<svg class="dim" viewBox="0 0 24 24"><ellipse cx="11" cy="11" rx="10" ry="5.500" transform="rotate(-25 11 11)" fill="none" stroke="#777" stroke-width="1.500"/><g fill="#ddd" stroke="#777"><circle cx="4" cy="14" r="2"/><circle cx="11" cy="11" r="2"/><circle cx="17" cy="5" r="2"/></g><use href="#star"/></svg><b class="ar g"></b>
<svg class="dim" viewBox="0 0 24 24"><path d="M3 4h17v13H3z" fill="none" stroke="#777" stroke-width="1.800"/><path d="M1 2h4v4H1zM18 2h4v4h-4zM1 15h4v4H1z" fill="#ddd" stroke="#777"/><use href="#star"/></svg><b class="ar g"></b>
<svg class="dim" viewBox="0 0 24 24"><path d="M2 11l7-9 11 5-2 10-11 2z" fill="none" stroke="#777" stroke-width="1.800"/><g fill="#ddd" stroke="#777"><circle cx="2.500" cy="11" r="2"/><circle cx="9" cy="3" r="2"/><circle cx="19" cy="7" r="2"/></g><use href="#star"/></svg><b class="ar g"></b>
</div>
<div class="tb last">
<i class="grip"></i>
<svg viewBox="0 0 24 24"><path d="M11 9l4 13M15 6l3 16M19 8l1 14M13 15l9 7M22 12l-6 10" stroke="#4f9a5c" stroke-width="1.400"/><path d="M2 21L13 7" stroke="#666" stroke-width="4"/><path d="M2 21l6-7" stroke="#f6e53c" stroke-width="3"/><path d="M6 4l10 12" stroke="#8a5a20" stroke-width="2.500"/><path d="M2 6c4-5 9-4 14-3l-1 3-5 0-5 3z" fill="#999" stroke="#444"/></svg>
<svg class="dim" viewBox="0 0 24 24"><path d="M2 2h4v20H2zM6 4.500h14v16H6z" fill="#eee" stroke="#777"/><path d="M8 7h8v10H8z" fill="none" stroke="#777" stroke-dasharray="2 1"/><path d="M15 9l2 13M19 6l1 16M22 9l-2 13" stroke="#8a9a8a"/></svg>
</div>
</div>

<main class="work">
<aside class="side">
<i class="hgrip"></i>
<svg viewBox="0 0 24 24"><path d="M0 9l7-4 6 13-8 4z" fill="#d8622a" stroke="#8c3f18"/><path d="M4 6l9-4 4 14-10 3z" fill="#f1c21f" stroke="#96791a"/><path d="M9 1l14 3-2 13-13-2z" fill="#6d97c8" stroke="#38597f"/><use href="#plus"/></svg>
<svg viewBox="0 0 24 24"><circle cx="12.500" cy="7.500" r="7" fill="#557eab" stroke="#33506f"/><path d="M8 4c4-3 5 1 3 3s-4 1-3-3zM14 7c3-3 5-2 5 1s-5 4-5-1z" fill="#c7dbee"/><path d="M.5 9l11.500 5.500L23.500 9v10L12 23.500.5 19z" fill="#f6d848" stroke="#7d6410"/><path d="M.5 9L12 14.500v9L.5 19z" fill="#d0a510" stroke="#7d6410"/><use href="#star"/></svg>
<svg viewBox="0 0 24 24"><path d="M2 3l7 15L15 3h7" fill="none" stroke="#3f5266" stroke-width="1.500"/><g fill="#e8eef5" stroke="#3f5266"><circle cx="2.500" cy="3" r="1.800"/><circle cx="9" cy="19" r="1.800"/><circle cx="15" cy="3" r="1.800"/><circle cx="22" cy="3" r="1.800"/></g><use href="#star"/></svg>
<svg viewBox="0 0 24 24"><path d="M1 23C1 11 9 1 23 1c0 9-7 14-17 15z" fill="#84abd6" stroke="#4b6d95"/><path d="M1 23C6 13 13 6 22 2" stroke="#3b5a80" fill="none"/><use href="#star"/></svg>
<svg viewBox="0 0 24 24"><path d="M5 1v18M8.500 1v18M12 1v18M15.500 1v18M19 1v18" stroke="#333" stroke-width="1.200"/><rect x="2.500" y="5.500" width="19" height="10" rx="1" fill="#6b97c9" stroke="#44688f"/><use href="#star"/></svg>
<i class="hs"></i>
<svg viewBox="0 0 24 24"><rect x=".6" y=".6" width="22" height="22" rx="2" fill="#a4bcd8" stroke="#7c95b3"/><path d="M3 3l5 15 7-14 6-1" fill="none" stroke="#fff" stroke-width="3"/><path d="M3 3l5 15 7-14 6-1" fill="none" stroke="#4a6078" stroke-width="1.200"/><circle cx="8" cy="18" r="1.600" fill="#fff" stroke="#4a6078"/><use href="#star"/></svg>
</aside>

<section class="layers">
<div class="dock"><span>Слои</span><svg viewBox="0 0 14 14"><use href="#float"/></svg><svg viewBox="0 0 14 14"><use href="#x"/></svg></div>
<div class="minibar">
<svg viewBox="0 0 16 16"><path d="M1 8l5-3 5 5-5 5z" fill="#f0c050" stroke="#b07828"/><path d="M1 8l3-2 4 6-2 3z" fill="#e86a4a"/><path d="M9 8l6-6" stroke="#b5651d" stroke-width="2.500"/></svg>
<svg viewBox="0 0 16 16"><path d="M1.500 5v9.500h8M4.500 3.500h8v8.500h-8z" fill="#eee" stroke="#777"/><path d="M7 10V3c0-3 3-3 3 0v7" fill="none" stroke="#556"/><path d="M9 9h7v7H9z" fill="#4f9a5c"/><path d="M12.500 10.500v4M10.500 12.500h4" stroke="#fff" stroke-width="1.300"/></svg>
<svg viewBox="0 0 16 16"><path d="M1 8q7-8 14 0-7 7-14 0z" fill="#fff" stroke="#666"/><circle cx="8" cy="7.500" r="3" fill="#6b90bf" stroke="#345"/><path d="M1 5q7-6 13-1" fill="none" stroke="#888"/><path d="M11 12h5l-2.500 3z"/></svg>
<svg viewBox="0 0 16 16"><path d="M1 2h14v2l-5 5v6H7V9L1 4z" fill="#5f8dc3" stroke="#48698f" stroke-width=".7"/><path d="M1 1h14v2.500H1z" fill="#f0d545"/></svg>
<svg class="dim" viewBox="0 0 16 16"><path d="M8 2C5 0 1 1 2 3c0 2 2 2 3 2-3 0-4 2-4 3 1 3 5 3 7 0" fill="none" stroke="#333" stroke-width="1.400"/><path d="M8 9h7v3l-2 1v3h-3v-3l-2-1z" fill="#888"/></svg><b class="ar g"></b>
<svg viewBox="0 0 16 16"><use href="#expand"/></svg>
<svg viewBox="0 0 16 16"><use href="#collapse"/></svg>
<svg viewBox="0 0 16 16"><path d="M1.500 1.500h11v11h-11z" fill="#eee" stroke="#777"/><rect x="9" y="10" width="6.500" height="5.500" rx="1" fill="#dd4b4b"/><path d="M10.500 12.700h4" stroke="#fff" stroke-width="1.300"/></svg>
</div>
<div class="tree">
<div class="lr sel"><svg class="ch" viewBox="0 0 9 6"><use href="#chev"/></svg><div class="hl"><svg class="k" viewBox="0 0 13 13"><use href="#ck"/></svg><svg class="k" viewBox="0 0 13 13"><use href="#rasterb"/></svg><b class="ul">oskol_basin</b></div><i class="ind"></i></div>
<div class="lv"><i class="sw"></i><span>0</span></div>
<div class="lv"><i class="sw none"></i><span>100</span></div>
<div class="lr"><svg class="ch" viewBox="0 0 9 6"></svg><div class="hl"><svg class="k" viewBox="0 0 13 13"><use href="#ck"/></svg><svg class="k" viewBox="0 0 13 13"><path d="M6.500-.7l7 7.200-7 7.200-7-7.200z" fill="#d9161f" stroke="#7b2025" stroke-width=".8"/></svg><b>outlet</b></div><svg class="mem" viewBox="0 0 17 17"><rect x=".5" y=".5" width="16" height="16" rx="2" fill="#f7f7f7" stroke="#ccc"/><path d="M5.500 4v9M7.500 4v9M9.500 4v9M11.500 4v9" stroke="#888"/><rect x="3.500" y="5.500" width="10" height="6" rx="1" fill="#f7f7f7" stroke="#666"/></svg><i class="ind"></i></div>
<div class="lr"><svg class="ch right" viewBox="0 0 9 9"><path d="M2.500.700l4 3.800-4 3.800" fill="none" stroke="#999" stroke-width="1.600"/></svg><div class="hl"><svg class="k" viewBox="0 0 13 13"><use href="#ck"/></svg><svg class="k" viewBox="0 0 13 13"><use href="#raster"/></svg><b>FlowAccumulationD8</b></div><i class="ind"></i></div>
<div class="lr"><svg class="ch" viewBox="0 0 9 6"><use href="#chev"/></svg><div class="hl"><svg class="k" viewBox="0 0 13 13"><use href="#ck"/></svg><svg class="k" viewBox="0 0 13 13"><use href="#raster"/></svg><b>DEM_filled</b></div><i class="ind"></i></div>
<div class="lv"><i class="sw"></i><span>49.3827</span></div>
<div class="lv"><i class="sw none"></i><span>272</span></div>
<div class="lr"><svg class="ch" viewBox="0 0 9 6"><use href="#chev"/></svg><div class="hl"><svg class="k" viewBox="0 0 13 13"><use href="#ck"/></svg><svg class="k" viewBox="0 0 13 13"><use href="#raster"/></svg><b>DEM</b></div><i class="ind"></i></div>
<div class="lv"><i class="sw"></i><span>-108</span></div>
<div class="lv"><i class="sw none"></i><span>272</span></div>
</div>
</section>

<section class="canvas">
<svg class="basin" viewBox="36 9 867 1989" shape-rendering="crispEdges"><filter id="rough" x="0" y="0" width="1" height="1"><feTurbulence type="fractalNoise" baseFrequency=".09" numOctaves="2" seed="4"/><feDisplacementMap in="SourceGraphic" scale="14" xChannelSelector="R" yChannelSelector="G"/></filter><path d="M36 9h867v1989H36z"/><path filter="url(#rough)" fill="#fff" d="M175 256L195 255 200 260 222 260 226 271 240 268 247 263 257 256 268 263 280 270 300 269 312 274 325 268 348 263 360 271 385 270 395 267 410 271 421 266 432 273 452 275 456 286 460 292 472 302 483 308 487 317 495 328 507 333 515 331 545 337 553 324 567 317 573 325 597 325 602 335 610 340 607 355 625 358 630 370 645 380 655 400 672 407 685 422 691 443 675 457 660 464 655 478 657 490 648 500 637 516 622 503 612 482 598 477 585 460 571 454 575 470 569 490 578 503 580 520 590 535 591 550 586 571 558 580 545 598 538 612 554 632 546 645 545 663 525 674 522 700 500 718 485 728 465 740 480 750 490 766 512 772 516 805 535 820 538 838 554 845 552 855 530 865 510 887 490 912 465 927 443 935 452 950 448 962 438 967 447 982 463 996 458 1010 450 1018 452 1038 470 1033 485 1032 490 1048 500 1055 512 1050 514 1024 545 1020 558 1012 585 1008 600 1013 620 997 647 970 655 968 664 973 672 962 707 964 700 980 690 990 695 1005 712 1008 716 1020 714 1055 725 1070 752 1087 750 1105 745 1120 757 1135 765 1145 762 1160 775 1172 777 1185 788 1202 795 1218 780 1228 778 1242 762 1258 750 1247 740 1243 735 1250 732 1265 717 1282 725 1295 727 1310 715 1325 725 1340 738 1353 725 1367 715 1371 690 1361 680 1367 663 1370 655 1382 668 1397 687 1410 680 1430 674 1438 678 1460 655 1469 635 1465 612 1469 602 1460 600 1448 587 1438 570 1447 558 1455 530 1450 515 1442 505 1448 484 1447 482 1470 473 1475 465 1500 453 1520 443 1535 446 1550 441 1562 446 1600 455 1620 448 1642 430 1650 421 1670 421 1705 415 1730 413 1750 407 1757 415 1770 413 1795 400 1800 395 1822 380 1835 370 1853 350 1872 340 1884 320 1890 302 1904 285 1893 265 1892 252 1885 230 1889 217 1891 216 1912 210 1900 200 1885 206 1865 207 1835 215 1822 230 1810 235 1785 242 1760 235 1735 234 1700 230 1690 236 1665 228 1657 215 1663 208 1645 216 1625 224 1610 233 1605 222 1598 232 1572 232 1562 220 1560 198 1554 205 1535 202 1520 228 1515 232 1506 253 1497 240 1485 235 1477 243 1460 252 1442 240 1437 226 1430 238 1415 237 1400 242 1370 232 1355 224 1335 223 1300 235 1288 255 1283 264 1268 285 1262 286 1252 293 1244 275 1225 266 1210 275 1190 277 1150 290 1150 302 1128 320 1126 332 1138 352 1148 365 1130 382 1128 389 1117 378 1105 362 1095 357 1065 350 1040 348 1018 340 1010 355 1003 358 980 370 975 385 978 384 962 375 950 350 940 338 933 350 915 345 900 342 880 328 880 322 895 303 908 285 890 250 870 240 853 220 840 218 830 222 800 220 767 233 755 228 733 211 732 212 700 216 690 222 685 225 640 234 625 222 612 205 606 202 585 212 572 215 562 230 548 215 540 210 510 206 470 202 440 205 410 195 405 190 380 172 355 148 356 146 340 138 323 158 310 158 285 165 268z"/></svg>
</section>

<section class="ident">
<div class="dock"><span>Результат определения</span><svg viewBox="0 0 14 14"><use href="#float"/></svg><svg viewBox="0 0 14 14"><use href="#x"/></svg></div>
<div class="minibar">
<svg viewBox="0 0 16 16"><rect x="1" y="2" width="14" height="13" rx="1" fill="#e4edf7" stroke="#9fb6d2"/><path d="M3 6h4M3 11h4" stroke="#678" /><path d="M8.500 4.500h5v3h-5zM8.500 9.500h5v3h-5z" fill="#fff" stroke="#7b9cc4"/></svg>
<i class="vs"></i>
<svg viewBox="0 0 16 16"><use href="#expand"/></svg>
<svg viewBox="0 0 16 16"><use href="#collapse"/></svg>
<svg viewBox="0 0 16 16"><use href="#expand"/><path d="M5 0l1.500 3.500H10L7.500 6 9 10 5 7.500 1 10l1-4L0 3.500h3.500z" fill="#fbd22c" stroke="#c98f13" stroke-width=".7"/></svg>
<i class="vs"></i>
<svg viewBox="0 0 16 16"><path d="M1.500 1.500h9v10h-9z" fill="#fae047" stroke="#c9a820"/><rect x="8.500" y="8.500" width="7" height="7" rx="1" fill="#d83b3b"/><circle cx="12" cy="12" r="2.200" fill="none" stroke="#fff"/><path d="M10.500 13.500l3-3" stroke="#fff"/></svg>
<i class="vs"></i>
<svg class="dim2" viewBox="0 0 16 16"><path d="M6.500 1.500h5l2 2v8h-7zM3.500 4.500h5l2 2v9h-7z" fill="#eee" stroke="#555"/><path d="M5 8h4M5 10.500h4M5 13h4" stroke="#777"/></svg>
<svg class="dim" viewBox="0 0 16 16"><path d="M4.500 1.500h8v5h-8zM4.500 10.500h8v4h-8z" fill="#eee" stroke="#777"/><rect x="1" y="5.500" width="15" height="6" rx="2" fill="#888"/></svg>
<i class="vs"></i>
<svg viewBox="0 0 16 16"><path d="M1 1.500h14M1 14.500h14M1.500 1v14M15 1v14" stroke="#555" stroke-dasharray="2 1.500"/><circle cx="6" cy="6" r="4.700" fill="#5583b8"/><text x="4.500" y="9.500" font-size="9" font-family="Liberation Serif" font-style="italic" font-weight="bold" fill="#fff">i</text><path d="M8 7l7 4-3 1 2 3-2 .5-1.500-3L8 15z" fill="#fff" stroke="#555" stroke-width=".8"/></svg><b class="ar"></b>
<svg viewBox="0 0 16 16"><path d="M6 6l9 9" stroke="#333" stroke-width="3"/><path d="M9 9l6 6" stroke="#f2d544" stroke-width="2"/><path d="M2 0l3 1 3 1 .5 5L6 8 1 7 0 4l4 1 1-2z" fill="#eee" stroke="#777"/></svg>
</div>
<div class="table">
<div class="th"><span>Объект</span><span>Значение</span></div>
<div class="tr"><svg class="ch" viewBox="0 0 9 6"><use href="#chev"/></svg><span class="w1">outlet</span></div>
<div class="tr d2"><svg class="ch" viewBox="0 0 9 6"><use href="#chev"/></svg><span class="w2">Заголовок</span></div>
<div class="tr d3"><svg class="ch" viewBox="0 0 9 6"><use href="#chev"/></svg><span class="w3">(Выведенные)</span></div>
<div class="tr leaf alt"><span class="cc">(clicked coordinate X)</span><span>383851.8</span></div>
<div class="tr leaf"><span class="cc">(clicked coordinate Y)</span><span>5440233.4</span></div>
<div class="tr leaf alt"><span>ID объекта</span><span>1</span></div>
<div class="tr leaf"><span>X</span><span>383846.4</span></div>
<div class="tr leaf alt"><span>Y</span><span>5440237.7</span></div>
<div class="fill"></div>
<div class="hsb"><svg viewBox="0 0 9 9"><path d="M6.500 1l-4 3.500 4 3.500" fill="none" stroke="#333" stroke-width="1.700"/></svg><i></i><svg viewBox="0 0 9 9"><path d="M2.500 1l4 3.500-4 3.500" fill="none" stroke="#333" stroke-width="1.700"/></svg></div>
</div>
<div class="mode"><label>Режим</label><div class="combo"><span>Текущий слой</span><svg class="cv" viewBox="0 0 9 6"><use href="#chevthin"/></svg></div></div>
<div class="view"><label>Вид</label><div class="combo off"><span>Дерево</span><svg class="cv" viewBox="0 0 9 6"><use href="#chevthin"/></svg></div><button class="help">Справка</button></div>
<div class="tabs"><span class="tab cur">Результат определения</span><span class="tab"><span>Инструменты анализа</span></span></div>
</section>
</main>

<footer class="status">
<div class="locate"><svg viewBox="0 0 12 12"><circle cx="5" cy="4.800" r="4" fill="none" stroke="#888" stroke-width="1.200"/><path d="M8 8l3.500 3.500" stroke="#888" stroke-width="1.500"/></svg><span>Type to locate (Ctrl+K)</span></div>
<label class="s1">Coordinate</label><div class="fld coord"><span>191871,5833670</span></div>
<svg class="sico" viewBox="0 0 16 16"><path d="M1 3l5 5M3 1l6 6M6 0l4 5M1 6l4 4" stroke="#333" stroke-width="1.600"/><circle cx="7" cy="6" r="4.200" fill="none" stroke="#555"/><path d="M6 10l5-4 4 5-4 4-4-1z" fill="#ddd" stroke="#333"/><circle cx="11" cy="11" r="2" fill="none" stroke="#444"/><path d="M12 3l3-3M13 6l3-1" stroke="#444"/></svg>
<label class="s2">Масштаб</label><div class="fld scale"><span>1:1915696</span><svg class="cv" viewBox="0 0 9 6"><use href="#chevthin"/></svg></div>
<svg class="sico lock" viewBox="0 0 16 16"><path d="M4.500 8V4.500c0-4.500 7-4.500 7 0V8" fill="none" stroke="#888" stroke-width="1.500"/><rect x="2" y="7" width="12" height="8.500" rx="1" fill="#555"/></svg>
<label class="s3">Magnifier</label><div class="spin magn"><span>100%</span><em><u></u><s></s></em></div>
<label class="s4">Вращение</label><div class="spin rot"><span>0,0 °</span><em><u></u><s></s></em></div>
<svg class="k" viewBox="0 0 13 13"><use href="#ck"/></svg><label class="s5">Отрисовка</label>
<svg class="crs" viewBox="0 0 15 15"><path d="M7.500.5c4 0 7 3 7 6.500H.5c0-3.500 3-6.500 7-6.500zM0 8.500h15l-7.500 6.500z" fill="#666"/><path d="M7.500 0v15M0 5h15M4.500 1Q2 8 7.500 14M10.500 1Q13 8 7.500 14" stroke="#e4e4e4" stroke-width=".6" fill="none"/></svg><label class="s6">EPSG:32637</label>
<svg class="msg" viewBox="0 0 16 16"><path d="M8 1c4.500 0 7.500 2.300 7.500 5.700 0 2.600-2 4.600-4 5.200L12 15l-3.500-2.600C4 12.500.5 10 .5 6.700.5 3.300 3.500 1 8 1z" fill="#555"/><path d="M3.500 5.700h2v2h-2zM7 5.700h2v2H7zM10.500 5.700h2v2h-2z" fill="#fff"/></svg>
</footer>
</body>
</html>
```
FILE: styles.css
```css
* { box-sizing: border-box; }
body {
  margin: 0; width: 1600px; height: 870px; overflow: hidden;
  display: flex; flex-direction: column;
  background: #f0f0f0; color: #000;
  font: 12px/16px "Noto Sans", "Open Sans", sans-serif;
  letter-spacing: -0.25px; white-space: nowrap;
}
svg { display: block; flex: none; overflow: visible; }
svg text { font-family: "DejaVu Sans", sans-serif; letter-spacing: 0; }
.defs { position: absolute; width: 0; height: 0; }
.dim { opacity: .36; }
.dim2 { opacity: .6; }

.titlebar { height: 23px; background: #fff; display: flex; align-items: center; padding-left: 2px; }
.logo { width: 16px; height: 16px; }
.apptitle { margin-left: 5px; flex: 1; font-size: 11.5px; letter-spacing: -0.2px; }
.winctl { width: 110px; height: 16px; margin: -3px 14px 0 0; }
.menubar { height: 21px; background: #fff; border-bottom: 1px solid #e4e4e4; display: flex; padding: 3px 0 0 8px; letter-spacing: -0.3px; }
.m1, .m2 { width: 56px; }
.m3 { width: 36px; }
.m4 { width: 45px; }
.m5 { width: 73px; }
.m6 { width: 60px; }
.m7 { width: 54px; }
.m8 { width: 47px; }
.m9 { width: 84px; }
.m10 { width: 68px; }
.m11 { width: 45px; }
.m12 { width: 64px; }
.m13 { width: 100px; }

.row { height: 34px; display: flex; border-top: 1px solid #fff; border-bottom: 1px solid #b2b2b2; flex: none; }
.tb { display: flex; align-items: center; padding-right: 1px; border-right: 1px solid #b2b2b2; box-shadow: 1px 0 #fff; }
.tb.last { border: 0; box-shadow: none; }
.tb > svg { width: 24px; height: 24px; margin: 0 4px 0 3px; }
.tb > svg.nudge { margin: 0 3px 0 4px; }
.grip { width: 2px; height: 26px; margin: 0 4px; background: repeating-linear-gradient(#b9b9b9 0 2px, transparent 2px 4px); }
.ar { width: 12px; display: flex; justify-content: center; }
.ar::after { content: ""; border: 4px solid transparent; border-top-color: #222; border-bottom: 0; }
.ar.g::after { border-top-color: #777; }
.on { width: 31px; height: 30px; background: #bedcf3; border: 1px solid #8ec5ef; display: flex; align-items: center; justify-content: center; }
.on svg { width: 24px; height: 24px; }
.vs { width: 1px; height: 24px; background: #c4c4c4; margin: 0 2px; }

.spin { display: flex; align-items: center; background: #fff; border: 1px solid #7a7a7a; height: 18px; padding-left: 3px; }
.spin span { flex: 1; }
.spin em { width: 13px; height: 14px; margin-right: 1px; background: #f0f0f0; border: 1px solid #c0c0c0; display: flex; flex-direction: column; align-items: center; justify-content: space-around; }
.spin u, .spin s { border: 3px solid transparent; height: 0; }
.spin u { border-bottom-color: #111; border-top: 0; }
.spin s { border-top-color: #111; border-bottom: 0; }
.combo { display: flex; align-items: center; justify-content: space-between; background: #e1e1e1; border: 1px solid #adadad; height: 20px; padding: 0 4px 0 3px; }
.combo span, .spin span, .fld span, .locate span { padding-top: 1px; }
.cv { width: 9px; height: 6px; }
.tol { width: 77px; }
.unit { width: 85px; padding-left: 2px; }

.work { flex: 1; display: flex; min-height: 0; }
.side { width: 35px; display: flex; flex-direction: column; align-items: center; padding: 4px 1px 0 0; border-bottom: 1px solid #b5b5b5; border-left: 1px solid #fff; }
.side svg { width: 24px; height: 24px; margin: 3px 0; }
.hgrip { width: 26px; height: 2px; margin-bottom: 4px; background: repeating-linear-gradient(90deg, #b9b9b9 0 2px, transparent 2px 4px); }
.hs { width: 25px; height: 1px; background: #c0c0c0; margin: 3px 0; }

.layers { width: 292px; display: flex; flex-direction: column; padding-top: 1px; }
.dock { height: 25px; background: #dadada; border: 1px solid #b5b5b5; display: flex; align-items: center; padding: 0 4px 0 4px; flex: none; }
.dock span { flex: 1; padding-top: 2px; }
.dock svg { width: 14px; height: 14px; margin-left: 7px; }
.minibar { height: 28px; display: flex; align-items: center; padding: 2px 0 0 5px; flex: none; }
.minibar > svg { width: 16px; height: 16px; margin-right: 7px; }
.minibar .ar { margin: 0 4px 0 -3px; }
.tree { flex: 1; background: #fff; border: 1px solid #828790; font-size: 11.500px; }
.lr { height: 20px; display: flex; align-items: center; }
.lr .ch { width: 9px; height: 6px; margin: 0 7px 0 5px; }
.lr .ch.right { height: 9px; }
.hl { flex: 1; height: 20px; display: flex; align-items: center; padding: 1px 0 0 2px; }
.hl b { padding-top: 1px; letter-spacing: -0.14px; }
.sel .hl { background: #d9d9d9; }
.k { width: 13px; height: 13px; flex: none; }
.hl .k { margin-right: 8px; }
.hl .k + .k { margin-right: 7px; }
.hl .ul { text-decoration: underline; letter-spacing: -0.4px; }
.ind { width: 2px; height: 16px; background: #d9d9d9; margin: 0 2px 0 1px; }
.sel .ind { margin: 0; width: 4px; height: 20px; }
.mem { width: 17px; height: 17px; margin-right: 2px; }
.lv { height: 20px; display: flex; align-items: center; padding-left: 43px; letter-spacing: -0.500px; }
.lv span { padding-top: 2px; }
.sw { width: 16px; height: 16px; background: #000; margin-right: 6px; }
.sw.none { background: none; }

.canvas { width: 931px; margin: 0 4px; background: #fff; border: 1px solid #828790; padding: 16px 0 0 320px; }
.basin { width: 289px; height: 663px; }

.ident { width: 334px; display: flex; flex-direction: column; padding-top: 1px; }
.ident .dock { border-right: 0; letter-spacing: -0.3px; }
.ident .minibar .vs { height: 16px; margin: 0 6.5px 0 -1.5px; }
.ident .minibar { padding-left: 5px; }
.table { height: 557px; background: #fff; border: 1px solid #828790; border-right: 0; display: flex; flex-direction: column; flex: none; font-size: 11.500px; letter-spacing: -0.1px; }
.th { height: 23px; display: flex; align-items: center; padding: 1px 0 0 4px; }
.th span:first-child { width: 230px; }
.th span + span { border-left: 1px solid #e0e0e0; height: 22px; line-height: 22px; padding-left: 4px; }
.tr { height: 17px; display: flex; align-items: center; padding-left: 5px; }
.tr .ch { width: 9px; height: 6px; margin-right: 5px; }
.tr.d2 { padding-left: 25px; background: linear-gradient(90deg, #f5f5f5 40px, #d0d0d0 40px); }
.tr.d3 { padding-left: 45px; }
.tr.leaf { padding-left: 83px; }
.leaf span:first-child { width: 155px; }
.leaf .cc { letter-spacing: -0.04px; }
.tr span { padding-left: 4px; }
.tr.leaf span { padding-left: 0; }
.leaf span + span { letter-spacing: -0.600px; }
.alt { background: #f5f5f5; }
.fill { flex: 1; }
.hsb { height: 15px; background: #f0f0f0; display: flex; align-items: center; justify-content: space-between; padding: 0 5px 0 4px; margin-bottom: 1px; }
.hsb svg { width: 9px; height: 9px; }
.hsb i { width: 295px; height: 15px; background: #cdcdcd; }
.ident label, .combo, .help, .tabs, .status, .spin { font-size: 11px; letter-spacing: -0.100px; }
.mode { display: flex; align-items: center; padding: 5px 5px 0 4px; height: 27px; }
.mode .combo { width: 286px; height: 22px; margin-left: auto; padding-left: 2px; letter-spacing: -0.25px; }
.mode label, .view label { padding-top: 1px; }
.view { display: flex; align-items: center; padding: 0 6px 0 4px; height: 38px; }
.view label { width: 26px; color: #888; }
.off { width: 69px; color: #888; background: #ccc; border-color: #bfbfbf; }
.off .cv { opacity: .4; }
.help { margin-left: auto; width: 54px; height: 18px; padding: 0; font-family: inherit; background: #e1e1e1; border: 1px solid #adadad; line-height: 16px; }
.tabs { display: flex; height: 21px; }
.tab { border-top: 1px solid #a8a8a8; height: 19px; padding: 0; flex: 1; letter-spacing: -0.25px; }
.tab span { display: block; width: 132px; height: 18px; padding: 1px 0 0 9px; border-bottom: 1px solid #d9d9d9; }
.tab.cur { flex: none; width: 148px; height: 20px; padding: 3px 0 0 11px; background: #fff; border: 0; border-right: 1px solid #ddd; letter-spacing: -0.08px; }

.status { height: 27px; flex: none; display: flex; align-items: center; padding-left: 4px; }
.status label { padding-top: 1px; }
.locate { width: 200px; height: 20px; border: 1px solid #7a7a7a; background: #fff; display: flex; align-items: center; color: #777; letter-spacing: -0.05px; }
.locate svg { width: 12px; height: 12px; margin: 0 7px 0 8px; }
.s1 { width: 57px; margin-left: 560px; letter-spacing: -0.4px; }
.fld { height: 20px; border: 1px solid #7a7a7a; background: #fff; display: flex; align-items: center; justify-content: space-between; }
.coord { width: 97px; padding-left: 6px; letter-spacing: -0.25px; }
.sico { width: 16px; height: 16px; margin-left: 3px; }
.s2 { margin-left: 12px; width: 49px; letter-spacing: -0.35px; }
.scale { width: 78px; padding: 0 4px 0 4px; letter-spacing: -0.2px; }
.lock { margin-left: 9px; }
.s3 { margin-left: 6px; width: 48px; letter-spacing: -0.4px; }
.magn { width: 82px; height: 20px; letter-spacing: -0.3px; }
.s4 { margin-left: 8px; width: 61px; letter-spacing: -0.4px; }
.rot { width: 80px; height: 20px; margin-right: 6px; }
.s5 { margin-left: 5px; width: 73px; letter-spacing: -0.2px; }
.crs { width: 15px; height: 15px; }
.s6 { margin-left: 3px; width: 76px; letter-spacing: -0.2px; }
.msg { width: 16px; height: 16px; }
```
